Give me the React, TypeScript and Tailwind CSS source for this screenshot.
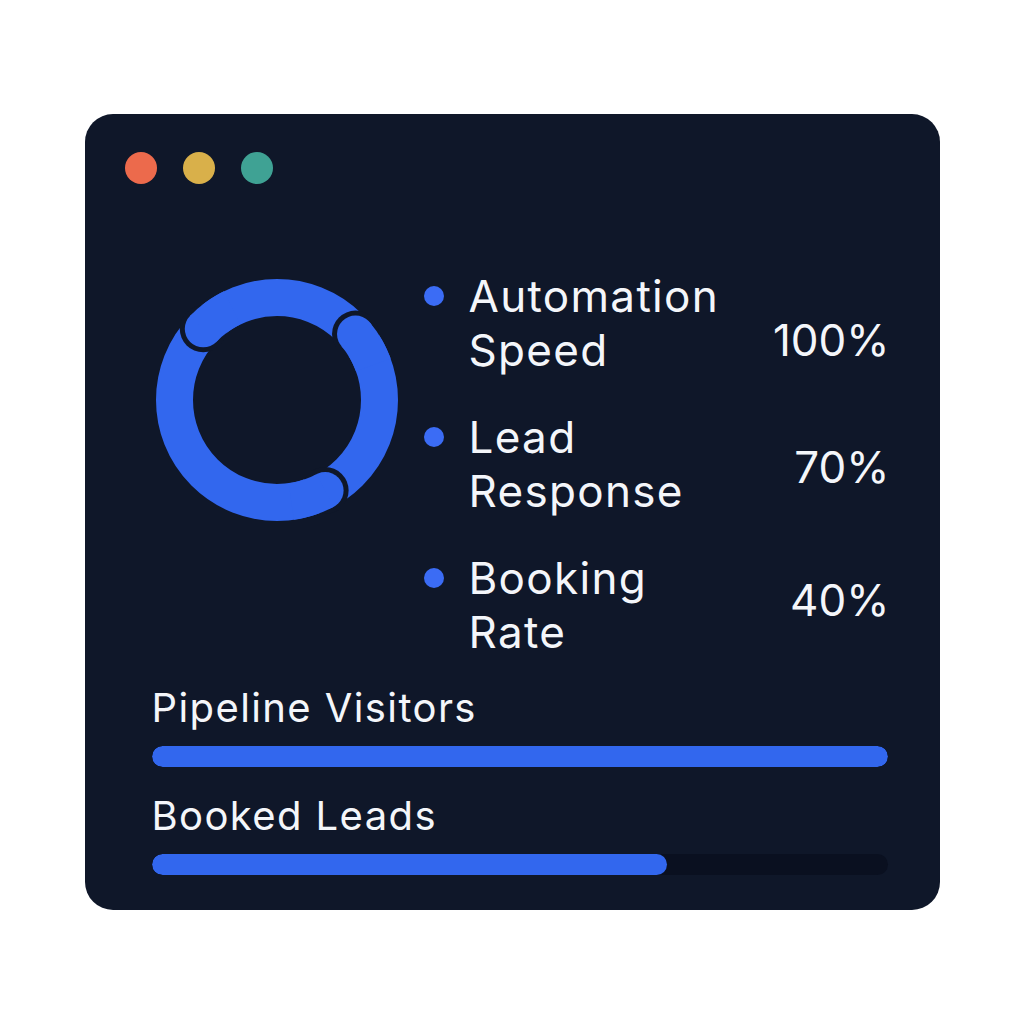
const BLUE = "#3267ee"
const BG = "#0f1729"

const stats = [
  { label: ["Automation", "Speed"], value: "100%", nudge: "mt-[44px]" },
  { label: ["Lead", "Response"], value: "70%", nudge: "mt-[30px]" },
  { label: ["Booking", "Rate"], value: "40%", nudge: "mt-[22px]" },
]

const bars = [
  { label: "Pipeline Visitors", pct: 100 },
  { label: "Booked Leads", pct: 70 },
]

// ring segments: each starts with a round cap laid over the previous one
function Donut() {
  const c = 125
  const r = 102.5
  const sw = 37
  const pt = (deg: number) => {
    const a = (deg * Math.PI) / 180
    return [c + r * Math.cos(a), c + r * Math.sin(a)]
  }
  const starts = [-136, -40, 62]

  return (
    <svg width="250" height="250" viewBox="0 0 250 250" className="shrink-0 mt-[6px]">
      <circle cx={c} cy={c} r={r} fill="none" stroke={BLUE} strokeWidth={sw} />
      {starts.map((s) => {
        const [x, y] = pt(s)
        const [x2, y2] = pt(s + 20)
        return (
          <g key={s}>
            <circle cx={x} cy={y} r={sw / 2 + 5} fill={BG} />
            <circle cx={x} cy={y} r={sw / 2} fill={BLUE} />
            <path
              d={`M ${x} ${y} A ${r} ${r} 0 0 1 ${x2} ${y2}`}
              fill="none"
              stroke={BLUE}
              strokeWidth={sw}
            />
          </g>
        )
      })}
    </svg>
  )
}

export default function App() {
  return (
    <div
      className="min-h-screen w-full bg-white flex items-center justify-center"
      style={{ fontFamily: "Inter, 'Noto Sans', sans-serif" }}
    >
      <div className="w-[855px] h-[796px] rounded-[28px] bg-[#0f1729] flex flex-col">
        {/* window dots */}
        <div className="flex gap-[26px] pt-[38px] pl-[40px]">
          <span className="w-8 h-8 rounded-full bg-[#ec6a4c]" />
          <span className="w-8 h-8 rounded-full bg-[#d9b04a]" />
          <span className="w-8 h-8 rounded-full bg-[#3fa294]" />
        </div>

        <div className="pl-[67px] pr-[52px] mt-[85px]">
          <div className="flex gap-[24px]">
            <Donut />
            <div className="flex-1 flex flex-col gap-[33px]">
              {stats.map((s) => (
                <div key={s.value} className="flex items-start">
                  <span className="w-5 h-5 rounded-full bg-[#3b6cf5] mt-[17px] ml-[-2px] shrink-0" />
                  <div className="ml-[25px] flex-1 text-[44px] leading-[54px] text-[#f4f6fa] tracking-[0.03em]">
                    <div>{s.label[0]}</div>
                    <div>{s.label[1]}</div>
                  </div>
                  <div className={`text-[44px] leading-[54px] text-[#f4f6fa] mr-[-2px] ${s.nudge}`}>{s.value}</div>
                </div>
              ))}
            </div>
          </div>

          <div className="mt-[25px] flex flex-col">
            {bars.map((b, i) => (
              <div key={b.label} className={i > 0 ? "mt-[25px]" : ""}>
                <div className="text-[40px] leading-[48px] text-[#f4f6fa] tracking-[0.035em]">{b.label}</div>
                <div className="mt-[14px] h-[21px] rounded-full bg-[#0a1020] overflow-hidden">
                  <div className="h-full rounded-full bg-[#3267ee]" style={{ width: `${b.pct}%` }} />
                </div>
              </div>
            ))}
          </div>
        </div>
      </div>
    </div>
  )
}
